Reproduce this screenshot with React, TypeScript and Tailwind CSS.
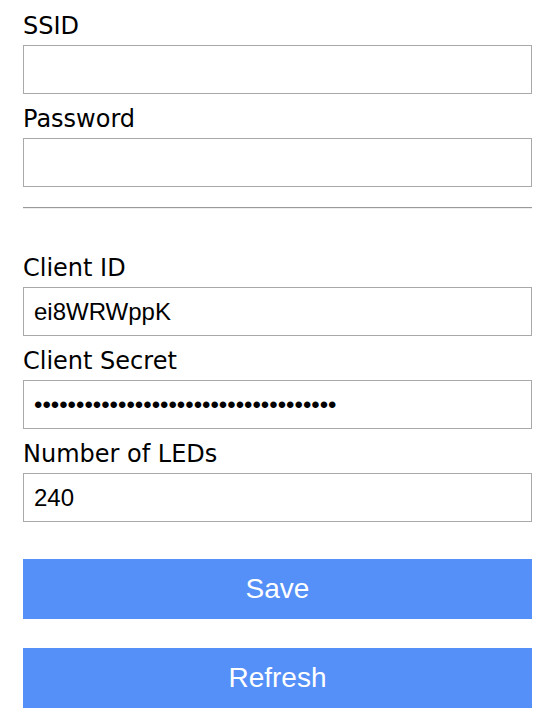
import React from "react";

const Field = ({ label, type = "text", value = "" }: { label: string; type?: string; value?: string }) => {
  return (
    <div className="flex flex-col">
      <label className="pt-[11px] pb-[5px] text-[24px] leading-[28px] text-black [font-family:'DejaVu_Sans',Verdana,sans-serif]">
        {label}
      </label>
      <input
        type={type}
        defaultValue={value}
        className="h-[49px] w-full border border-[#a9a9a9] bg-white px-[10px] text-[24px] text-black outline-none [font-family:'Liberation_Sans',Arial,sans-serif]"
      />
    </div>
  );
};

const App = () => {
  return (
    <div className="min-h-[720px] bg-white">
      <div className="flex w-[509px] flex-col pl-0 pt-[1px] ml-[23px]">
        <Field label="SSID" />
        <Field label="Password" type="password" />
        <div className="mt-[20px] mb-[34px] border-t border-b border-t-[#9a9a9a] border-b-[#eeeeee]" />
        <Field label="Client ID" value="ei8WRWppK" />
        <Field label="Client Secret" type="password" value="••••••••••••••••••••••••••••••••••••" />
        <Field label="Number of LEDs" value="240" />
        <button className="mt-[37px] h-[60px] w-full bg-[#558ff8] text-[28px] text-white [font-family:'Liberation_Sans',Arial,sans-serif]">
          Save
        </button>
        <button className="mt-[29px] h-[60px] w-full bg-[#558ff8] text-[28px] text-white [font-family:'Liberation_Sans',Arial,sans-serif]">
          Refresh
        </button>
      </div>
    </div>
  );
};

export default App;
